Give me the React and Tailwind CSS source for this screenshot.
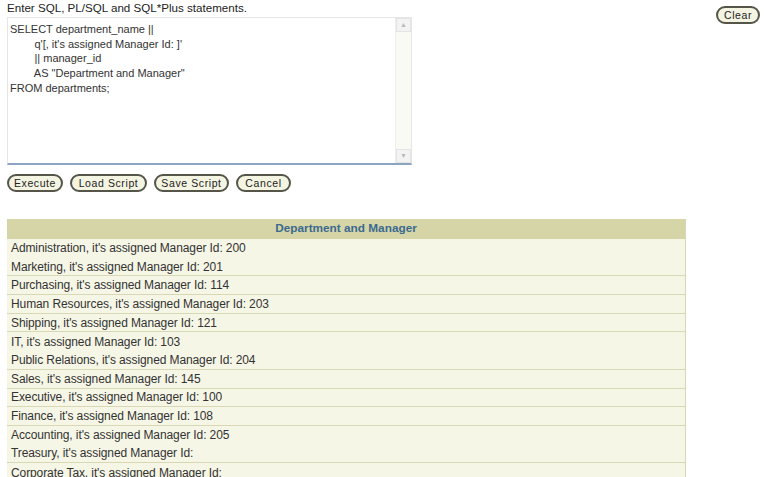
import React from "react";

const rows = [
  { text: "Administration, it's assigned Manager Id: 200", line: false },
  { text: "Marketing, it's assigned Manager Id: 201", line: true },
  { text: "Purchasing, it's assigned Manager Id: 114", line: true },
  { text: "Human Resources, it's assigned Manager Id: 203", line: true },
  { text: "Shipping, it's assigned Manager Id: 121", line: true },
  { text: "IT, it's assigned Manager Id: 103", line: false },
  { text: "Public Relations, it's assigned Manager Id: 204", line: true },
  { text: "Sales, it's assigned Manager Id: 145", line: true },
  { text: "Executive, it's assigned Manager Id: 100", line: true },
  { text: "Finance, it's assigned Manager Id: 108", line: true },
  { text: "Accounting, it's assigned Manager Id: 205", line: false },
  { text: "Treasury, it's assigned Manager Id:", line: true },
  { text: "Corporate Tax, it's assigned Manager Id:", line: false },
];

const Pill = ({ children, w }) => (
  <button
    className={`h-[18px] ${w} rounded-full border-2 border-[#55554a] bg-[#f4f4e2] text-[10.5px] leading-none tracking-[0.6px] text-[#222]`}
  >
    {children}
  </button>
);

const App = () => {
  return (
    <div className="w-[771px] h-[477px] overflow-hidden bg-white font-['Liberation_Sans',Arial,sans-serif] text-[#222]">
      <div className="flex justify-between">
        <div className="pl-[7px] pt-[1px]">
          <p className="text-[11.6px] leading-[14px] text-[#222]">
            Enter SQL, PL/SQL and SQL*Plus statements.
          </p>
          <div className="mt-[2px] w-[405px] h-[148px] flex border border-[#e6e6e6] border-b-[#8ea5c2] border-b-2 bg-white">
            <pre className="flex-1 px-[2px] pt-[4px] text-[11px] leading-[14.7px] text-[#333] font-['Liberation_Sans',Arial,sans-serif]">
{`SELECT department_name ||
        q'[, it's assigned Manager Id: ]'
        || manager_id
        AS "Department and Manager"
FROM departments;`}
            </pre>
            <div className="w-[16px] flex flex-col justify-between border-l border-[#eeeeee] bg-[#fafaf4]">
              <div className="h-[14px] flex items-center justify-center border border-[#e4e4e4] bg-[#f3f3f3] text-[7px] text-[#bbb]">▲</div>
              <div className="h-[14px] flex items-center justify-center border border-[#e4e4e4] bg-[#f3f3f3] text-[7px] text-[#bbb]">▼</div>
            </div>
          </div>
          <div className="flex mt-[9px]">
            <Pill w="w-[56px]">Execute</Pill>
            <div className="w-[7px]" />
            <Pill w="w-[77px]">Load Script</Pill>
            <div className="w-[7px]" />
            <Pill w="w-[75px]">Save Script</Pill>
            <div className="w-[7px]" />
            <Pill w="w-[55px]">Cancel</Pill>
          </div>
        </div>
        <div className="pt-[2px] pr-[11px]">
          <Pill w="w-[44px]">Clear</Pill>
        </div>
      </div>

      <div className="ml-[7px] mt-[27px] w-[679px] border-r border-[#d6d6b4]">
        <div className="h-[20px] flex items-center justify-center bg-[#d6d5a8] text-[11.8px] font-bold text-[#3b6a8f]">
          Department and Manager
        </div>
        {rows.map((r) => (
          <div
            key={r.text}
            className={`h-[18.7px] flex items-center pl-[4px] bg-[#f6f6e6] text-[12px] tracking-[-0.1px] text-[#333] ${
              r.line ? "border-b border-[#d8d8b4]" : ""
            }`}
          >
            {r.text}
          </div>
        ))}
      </div>
    </div>
  );
};

export default App;
